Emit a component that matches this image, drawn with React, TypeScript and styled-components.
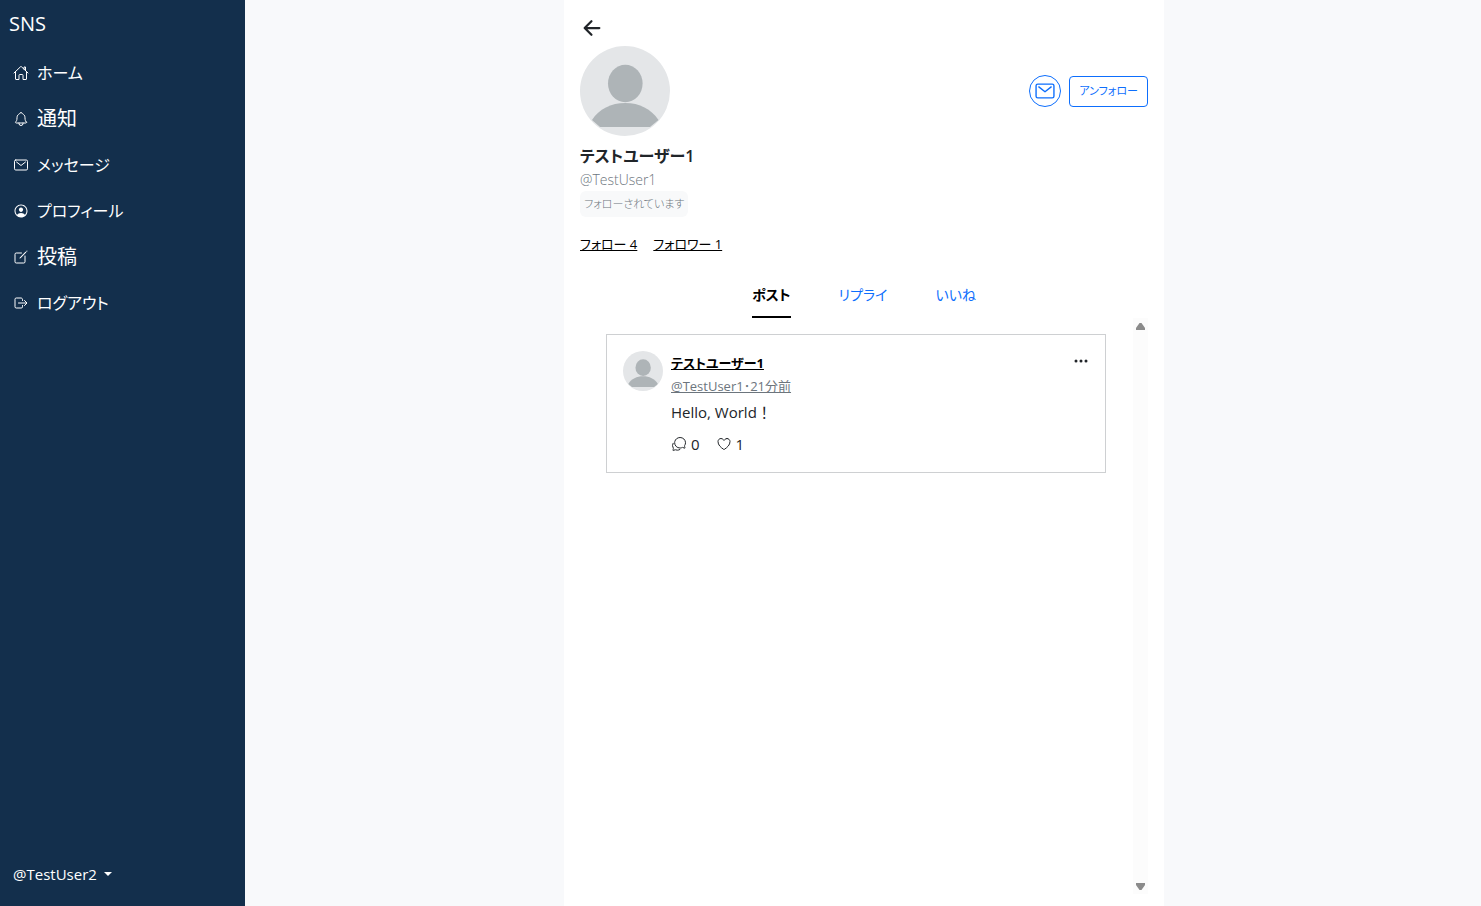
import React from "react";
import styled, { createGlobalStyle } from "styled-components";
import {
  IoArrowBack,
  IoChatbubblesOutline,
  IoCreateOutline,
  IoEllipsisHorizontal,
  IoHeartOutline,
  IoHomeOutline,
  IoLogOutOutline,
  IoMailOutline,
  IoNotificationsOutline,
  IoPersonCircleOutline,
} from "react-icons/io5";

const GlobalStyle = createGlobalStyle`
  *, *::before, *::after { box-sizing: border-box; }
  body {
    margin: 0;
    background: #f8f9fb;
    color: #212529;
    font-family: "Open Sans", "Noto Sans CJK JP", sans-serif;
    font-feature-settings: "palt";
    font-size: 15px;
    line-height: 24px;
  }
  a { color: inherit; }
  button { font: inherit; font-feature-settings: inherit; color: inherit; background: none; border: 0; padding: 0; cursor: pointer; }
  h1, h2, p, ul { margin: 0; padding: 0; }
  ul { list-style: none; }
  svg { display: block; flex: none; }
`;

const Page = styled.div`
  display: flex;
  gap: 2px;
  height: 100vh;
`;

const Sidebar = styled.nav`
  display: flex;
  flex-direction: column;
  flex: none;
  width: 245px;
  padding: 8px 8px 16px;
  background: #132f4c;
  color: #fff;
`;

const Brand = styled.a`
  padding: 0 1px;
  font-size: 20px;
  line-height: 32px;
  text-decoration: none;
`;

const NavList = styled.ul`
  flex: 1;
  padding-top: 10px;
`;

const NavLink = styled.a<{ $kanji?: boolean }>`
  display: flex;
  align-items: center;
  gap: 8px;
  height: 46px;
  padding-left: 5px;
  font-size: ${(p) => (p.$kanji ? 20 : 16)}px;
  text-decoration: none;
`;

const AccountButton = styled.button`
  display: flex;
  align-items: center;
  align-self: flex-start;
  gap: 7px;
  height: 32px;
  padding-left: 5px;
`;

const Caret = styled.span`
  border: 4px solid transparent;
  border-top-color: currentColor;
  border-bottom: 0;
`;

const Main = styled.main`
  display: flex;
  justify-content: center;
  flex: 1;
  min-width: 0;
`;

const Column = styled.div`
  display: flex;
  flex-direction: column;
  width: 100%;
  max-width: 600px;
  padding: 16px 16px 12px;
  background: #fff;
`;

const BackButton = styled.button`
  align-self: flex-start;
  margin-bottom: 6px;
`;

const ProfileTop = styled.div`
  display: flex;
  align-items: center;
  justify-content: space-between;
  margin-bottom: 8px;
`;

const Actions = styled.div`
  display: flex;
  align-items: center;
  gap: 8px;
  color: #0d6efd;
`;

const RoundButton = styled.button`
  display: grid;
  place-items: center;
  width: 32px;
  height: 32px;
  border: 1px solid #0d6efd;
  border-radius: 50%;
`;

const FollowButton = styled.button`
  height: 31px;
  padding: 0 9px;
  border: 1px solid #0d6efd;
  border-radius: 4px;
  font-size: 11px;
`;

const ProfileName = styled.h1`
  font-size: 16px;
  line-height: 25px;
  font-weight: 600;
`;

const Handle = styled.p`
  color: #6c757d;
  font-size: 14px;
  font-weight: 300;
  line-height: 22px;
`;

const FollowedBadge = styled.span`
  align-self: flex-start;
  padding: 0 4px;
  border-radius: 6px;
  background: #f8f9fa;
  color: #6c757d;
  font-size: 11px;
  font-weight: 300;
  line-height: 26px;
`;

const Counts = styled.div`
  display: flex;
  gap: 16px;
  margin-top: 15px;
  color: #000;
`;

const CountLink = styled.a`
  font-size: 13px;
`;

const Tabs = styled.div`
  display: flex;
  justify-content: center;
  gap: 48px;
  margin-top: 18px;
`;

const Tab = styled.button<{ $active?: boolean }>`
  height: 44px;
  border-bottom: 2px solid ${(p) => (p.$active ? "#000" : "transparent")};
  color: ${(p) => (p.$active ? "#000" : "#0d6efd")};
  font-size: 14px;
  font-weight: ${(p) => (p.$active ? 700 : 400)};
`;

const Feed = styled.div`
  display: flex;
  flex: 1;
  min-height: 0;
`;

const Posts = styled.div`
  flex: 1;
  min-width: 0;
  padding: 16px 1px 16px 0;
`;

const ScrollTrack = styled.div`
  display: flex;
  flex-direction: column;
  justify-content: space-between;
  align-items: center;
  width: 15px;
  padding: 4px 0;
  background: #fcfcfc;
  color: #8b8b8b;
`;

const Post = styled.article`
  display: flex;
  align-items: flex-start;
  gap: 8px;
  max-width: 500px;
  margin: 0 auto;
  padding: 16px;
  border: 1px solid #ced0d2;
`;

const PostBody = styled.div`
  flex: 1;
  min-width: 0;
`;

const PostAuthor = styled.a`
  display: block;
  width: fit-content;
  color: #000;
  font-size: 13px;
  font-weight: 700;
`;

const PostMeta = styled.a`
  display: block;
  width: fit-content;
  color: #6c757d;
  font-size: 13px;
  line-height: 22px;
`;

const PostText = styled.p`
  margin-top: 3px;
  font-feature-settings: normal;
`;

const Reactions = styled.div`
  display: flex;
  gap: 16px;
  margin: 8px 0 0;
`;

const Reaction = styled.button`
  display: flex;
  align-items: center;
  gap: 4px;
`;

const MenuButton = styled.button`
  padding: 2px 0;
`;

function Avatar({ size }: { size: number }) {
  return (
    <svg width={size} height={size} viewBox="0 0 90 90" role="img" aria-label="プロフィール画像">
      <clipPath id={`face-${size}`}>
        <circle cx="45" cy="45" r="45" />
      </clipPath>
      <g clipPath={`url(#face-${size})`}>
        <rect width="90" height="90" fill="#e4e6e8" />
        <ellipse cx="45.3" cy="37.5" rx="17.3" ry="18.8" fill="#aeb4b7" />
        <path d="M12 74C19 63 31 57 45.3 57S71 63 78.5 74L70 81H20Z" fill="#aeb4b7" />
      </g>
    </svg>
  );
}

const navItems = [
  { label: "ホーム", Icon: IoHomeOutline },
  { label: "通知", Icon: IoNotificationsOutline, kanji: true },
  { label: "メッセージ", Icon: IoMailOutline },
  { label: "プロフィール", Icon: IoPersonCircleOutline },
  { label: "投稿", Icon: IoCreateOutline, kanji: true },
  { label: "ログアウト", Icon: IoLogOutOutline },
];

export default function App() {
  return (
    <>
      <GlobalStyle />
      <Page lang="ja">
        <Sidebar>
          <Brand href="#">SNS</Brand>
          <NavList>
            {navItems.map(({ label, Icon, kanji }) => (
              <li key={label}>
                <NavLink href="#" $kanji={kanji}>
                  <Icon size={16} />
                  {label}
                </NavLink>
              </li>
            ))}
          </NavList>
          <AccountButton>
            @TestUser2
            <Caret />
          </AccountButton>
        </Sidebar>
        <Main>
          <Column>
            <BackButton aria-label="戻る">
              <IoArrowBack size={24} />
            </BackButton>
            <ProfileTop>
              <Avatar size={90} />
              <Actions>
                <RoundButton aria-label="メッセージを送る">
                  <IoMailOutline size={22} />
                </RoundButton>
                <FollowButton>アンフォロー</FollowButton>
              </Actions>
            </ProfileTop>
            <ProfileName>テストユーザー1</ProfileName>
            <Handle>@TestUser1</Handle>
            <FollowedBadge>フォローされています</FollowedBadge>
            <Counts>
              <CountLink href="#">フォロー 4</CountLink>
              <CountLink href="#">フォロワー 1</CountLink>
            </Counts>
            <Tabs role="tablist">
              <Tab role="tab" aria-selected="true" $active>ポスト</Tab>
              <Tab role="tab" aria-selected="false">リプライ</Tab>
              <Tab role="tab" aria-selected="false">いいね</Tab>
            </Tabs>
            <Feed>
              <Posts>
                <Post>
                  <Avatar size={40} />
                  <PostBody>
                    <PostAuthor href="#">テストユーザー1</PostAuthor>
                    <PostMeta href="#">@TestUser1･21分前</PostMeta>
                    <PostText>Hello, World！</PostText>
                    <Reactions>
                      <Reaction aria-label="返信 0">
                        <IoChatbubblesOutline size={16} />0
                      </Reaction>
                      <Reaction aria-label="いいね 1">
                        <IoHeartOutline size={16} />1
                      </Reaction>
                    </Reactions>
                  </PostBody>
                  <MenuButton aria-label="メニュー">
                    <IoEllipsisHorizontal size={16} />
                  </MenuButton>
                </Post>
              </Posts>
              <ScrollTrack aria-hidden="true">
                <svg width="9" height="8" viewBox="0 0 9 8"><path d="M3.5 1H5.5L9 6V8H0V6Z" fill="currentColor" /></svg>
                <svg width="9" height="8" viewBox="0 0 9 8"><path d="M3.5 8H5.5L9 3V1H0V3Z" fill="currentColor" /></svg>
              </ScrollTrack>
            </Feed>
          </Column>
        </Main>
      </Page>
    </>
  );
}
